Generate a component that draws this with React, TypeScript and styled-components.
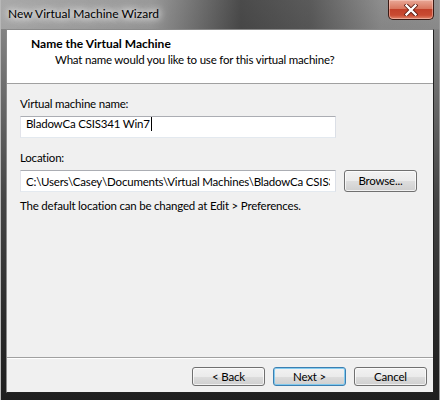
import React from "react";
import styled, { createGlobalStyle } from "styled-components";

const Global = createGlobalStyle`
  html, body { margin: 0; padding: 0; background: #1a1a1a; }
  body { font-family: Lato, "Noto Sans", sans-serif; font-size: 11.5px; letter-spacing: -0.2px; color: #000; }
  * { box-sizing: border-box; }
`;

const Window = styled.div`
  width: 440px;
  height: 400px;
  display: flex;
  flex-direction: column;
  background: linear-gradient(to bottom, #8e8e8e 0px, #6c6c6c 90px, #444 200px, #2a2a2a 320px, #1e1e1e 400px);
  border-left: 1px solid #b8b8b8;
  border-right: 1px solid #9a9a9a;
`;

const TitleBar = styled.div`
  height: 29px;
  flex: none;
  display: flex;
  align-items: flex-start;
  padding-left: 7px;
  background: linear-gradient(to right, rgba(190,190,190,0.55) 0px, rgba(170,170,170,0.4) 150px, rgba(30,30,30,0.6) 240px, rgba(40,40,40,0.5) 310px, rgba(140,140,140,0.2) 380px, rgba(160,160,160,0.2) 440px);
`;

const TitleText = styled.div`
  margin-top: 6px;
  font-size: 12px;
  letter-spacing: 0;
  color: #000;
  text-shadow: 0 0 6px #fff, 0 0 10px #fff, 0 0 14px rgba(255,255,255,0.8);
`;

const CloseButton = styled.div`
  margin-left: auto;
  margin-right: 5px;
  width: 46px;
  height: 20px;
  border: 1px solid #3a1a14;
  border-top: none;
  border-radius: 0 0 5px 5px;
  background: linear-gradient(to bottom, #e9a897 0%, #d9775f 45%, #c2412a 50%, #c94b32 80%, #e0856a 100%);
  box-shadow: inset 0 0 0 1px rgba(255,220,210,0.45);
  display: flex;
  align-items: center;
  justify-content: center;
`;

const Client = styled.div`
  flex: 1;
  margin: 0 5px 7px 5px;
  border: 1px solid #8a8a8a;
  border-right-color: #222;
  border-bottom-color: #222;
  background: #f0f0f0;
  display: flex;
  flex-direction: column;
`;

const Header = styled.div`
  height: 54px;
  flex: none;
  background: #fff;
  border-bottom: 1px solid #a0a0a0;
  padding: 6px 0 0 24px;
`;

const HeaderTitle = styled.div`
  font-weight: bold;
  font-size: 12px;
  letter-spacing: 0;
  line-height: 16px;
`;

const HeaderSub = styled.div`
  padding-left: 24px;
  line-height: 16px;
`;

const Body = styled.div`
  flex: 1;
  padding: 12px 0 0 13px;
  display: flex;
  flex-direction: column;
`;

const Label = styled.div<{ $top?: number }>`
  line-height: 16px;
  margin-top: ${(p) => p.$top ?? 0}px;
`;

const Row = styled.div`
  display: flex;
  align-items: center;
  gap: 8px;
  margin-top: 4px;
`;

const boxStyle = `
  width: 316px;
  height: 22px;
  border: 1px solid #abadb3;
  border-left-color: #e2e3ea;
  border-right-color: #dbdfe6;
  border-bottom-color: #e3e9ef;
  background: #fff;
  padding: 0 5px;
  margin: 0;
  line-height: 20px;
  font: inherit;
  letter-spacing: inherit;
  color: #000;
  white-space: nowrap;
  overflow: hidden;
`;

const TextBox = styled.div`
  ${boxStyle}
`;

const TextInput = styled.input`
  ${boxStyle}
  outline: none;
`;

const Caret = styled.span`
  display: inline-block;
  width: 1px;
  height: 14px;
  margin-left: 1px;
  background: #000;
  vertical-align: -3px;
`;

const Button = styled.div<{ $default?: boolean; $h?: number }>`
  width: 73px;
  height: ${(p) => p.$h ?? 22}px;
  border: 1px solid ${(p) => (p.$default ? "#3c7fb1" : "#707070")};
  border-radius: 3px;
  background: linear-gradient(to bottom, #f2f2f2 0%, #ebebeb 50%, #dddddd 51%, #cfcfcf 100%);
  box-shadow: inset 0 0 0 1px ${(p) => (p.$default ? "rgba(120,200,240,0.9)" : "rgba(255,255,255,0.7)")};
  display: flex;
  align-items: center;
  justify-content: center;
  line-height: 16px;
`;

const Note = styled.div`
  margin-top: 6px;
  line-height: 16px;
`;

const Footer = styled.div`
  height: 35px;
  flex: none;
  border-top: 1px solid #a0a0a0;
  box-shadow: inset 0 1px 0 #fff;
  display: flex;
  justify-content: flex-end;
  align-items: flex-start;
  gap: 8px;
  padding: 9px 6px 0 0;
`;

export default function App() {
  return (
    <>
      <Global />
      <Window>
        <TitleBar>
          <TitleText>New Virtual Machine Wizard</TitleText>
          <CloseButton>
            <svg width="14" height="12" viewBox="0 0 14 12">
              <path d="M2.5 1.5 L11.5 10.5 M11.5 1.5 L2.5 10.5" stroke="#5a1a10" strokeWidth="4" strokeLinecap="square" />
              <path d="M2.5 1.5 L11.5 10.5 M11.5 1.5 L2.5 10.5" stroke="#fff" strokeWidth="2.4" strokeLinecap="square" />
            </svg>
          </CloseButton>
        </TitleBar>
        <Client>
          <Header>
            <HeaderTitle>Name the Virtual Machine</HeaderTitle>
            <HeaderSub>What name would you like to use for this virtual machine?</HeaderSub>
          </Header>
          <Body>
            <Label>Virtual machine name:</Label>
            <Row>
              <TextBox>
                BladowCa CSIS341 Win7<Caret />
              </TextBox>
            </Row>
            <Label $top={12}>Location:</Label>
            <Row>
              <TextInput readOnly value={"C:\\Users\\Casey\\Documents\\Virtual Machines\\BladowCa CSIS341 Win7"} />
              <Button>Browse...</Button>
            </Row>
            <Note>The default location can be changed at Edit &gt; Preferences.</Note>
          </Body>
          <Footer>
            <Button $h={19}>&lt; Back</Button>
            <Button $h={19} $default>Next &gt;</Button>
            <Button $h={19}>Cancel</Button>
          </Footer>
        </Client>
      </Window>
    </>
  );
}
